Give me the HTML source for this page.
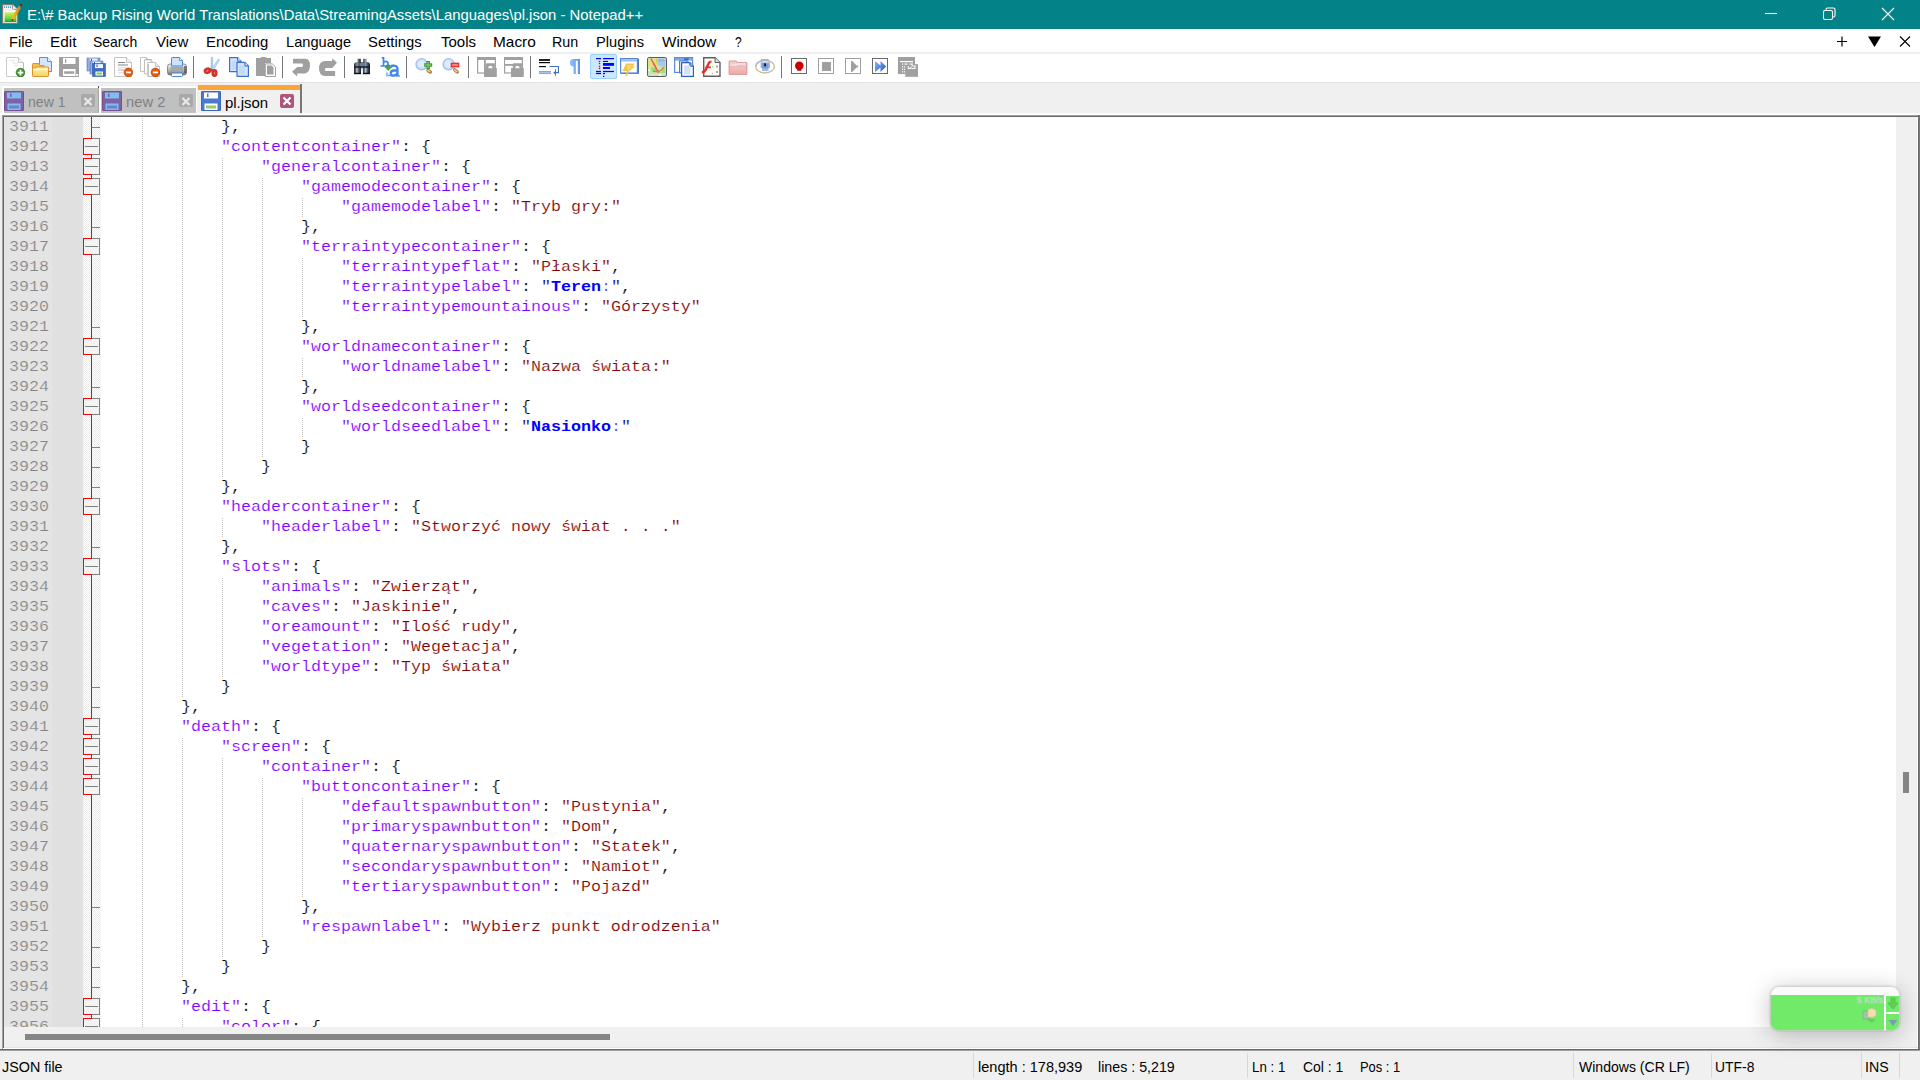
<!DOCTYPE html><html><head><meta charset="utf-8"><title>pl.json - Notepad++</title><style>

*{margin:0;padding:0;box-sizing:border-box}
html,body{width:1920px;height:1080px;overflow:hidden;background:#f0f0f0}
body{position:relative;font-family:"Liberation Sans", sans-serif;font-size:15px;color:#000}
.abs{position:absolute}
#title{left:0;top:0;width:1920px;height:29px;background:#038387}
#title .t{left:28px;top:0;height:29px;line-height:29px;color:#fff;font-size:15px;white-space:nowrap;transform-origin:0 50%}
#menu{left:0;top:29px;width:1920px;height:23px;background:#fff}
#menu span{position:absolute;top:0;height:23px;line-height:26px;font-size:15px;white-space:nowrap;transform-origin:0 50%}
#msep{left:0;top:52px;width:1920px;height:2px;background:#f0f0f0}
#tool{left:0;top:54px;width:1920px;height:28px;background:#fff}
#tsep{left:0;top:82px;width:1920px;height:1px;background:#e2e2e2}
.ic{position:absolute;top:3px;width:20px;height:20px}
.ic svg{display:block}
.sep{position:absolute;top:2px;width:1px;height:22px;background:#767676}
.hot{position:absolute;top:0;height:25px;width:27px;background:#cce8ff;border:1px solid #99d1ff;border-radius:2px}
#tabs{left:0;top:84px;width:1920px;height:30px;background:#f0f0f0}
.tab{position:absolute;top:4px;height:25px;background:#c0c0c0}
.tab .tx{position:absolute;top:0;line-height:28px;font-size:15px;color:#808080;white-space:nowrap;transform-origin:0 50%}
.tab.act{top:1px;height:29px;background:#f0f0f0}
.tab.act .tx{color:#000;line-height:35px}
.cls{position:absolute;width:14px;height:13px;border-radius:2px}
#edb{left:0;top:114px;width:1920px;height:937px}
#ed{left:4px;top:117px;width:1892px;height:910px;background:#fff;overflow:hidden}
#lnm{left:0;top:0;width:48px;height:910px;background:#e4e4e4}
#bkm{left:48px;top:0;width:31px;height:910px;background:#e0e0e0}
#fold{left:79px;top:0;width:18px;height:910px;background:#f2f2f2}
.ln{position:absolute;left:0;width:48px;height:20px;line-height:20px;font-family:"Liberation Mono", monospace;font-size:16.667px;color:#858585;padding-left:5px;white-space:pre;transform:scaleY(.88);transform-origin:0 14.5px;-webkit-text-stroke:.2px #e4e4e4}
.cl{position:absolute;height:20px;line-height:20px;font-family:"Liberation Mono", monospace;font-size:16.667px;white-space:pre;color:#000;transform:scaleY(.88);transform-origin:0 14.5px;-webkit-text-stroke:.18px #fff}
.b{-webkit-text-stroke:0}
.k{color:#8000ff}.s{color:#800000}.o{color:#000}.q{color:#000080}.b{color:#0000ff;font-weight:bold}.l{color:#4848ff}
.g{position:absolute;width:1px;background-image:linear-gradient(#c0c0c0 50%,transparent 50%);background-size:1px 2px}
#vs{left:1896px;top:117px;width:21px;height:910px;background:#f0f0f0}
#hs{left:4px;top:1027px;width:1913px;height:20px;background:#f0f0f0}
#status{left:0;top:1051px;width:1920px;height:29px;background:#f0f0f0}
#status span{position:absolute;top:0;height:29px;line-height:31px;font-size:15px;white-space:nowrap;transform-origin:0 50%}
#status i{position:absolute;top:2px;width:1px;height:25px;background:#d7d7d7}

</style></head><body>
<div id="title" class="abs">
<div class="abs" style="left:2px;top:4px;width:20px;height:20px"><svg width="21" height="20" viewBox="0 0 21 20" ><defs><linearGradient id="tg" x1="0" y1="0" x2="0" y2="1"><stop offset="0" stop-color="#e2ec60"/><stop offset=".55" stop-color="#6fe040"/><stop offset=".85" stop-color="#3fc42c"/><stop offset="1" stop-color="#1c6a12"/></linearGradient><linearGradient id="tp" x1="0" y1="0" x2="1" y2="0"><stop offset="0" stop-color="#f8c020"/><stop offset="1" stop-color="#d88a10"/></linearGradient></defs><path d="M0.6 0.6H10.5L15.7 5.5V19.4H0.6Z" fill="#f8f8fa" stroke="#8e7474" stroke-width="1.1"/><path d="M10.5 0.6V5.5H15.7" fill="#dfe4ea" stroke="#8a8a8a" stroke-width=".8"/><path d="M2.5 2.3v1.6M4.5 2.3v1.6M6.5 2.3v1.6M8.5 2.3v1.6" stroke="#4fb0b4" stroke-width="1.2"/><path d="M2 5.8H12" stroke="#e4e8ee" stroke-width="1"/><rect x="2.6" y="8.2" width="11.8" height="9.6" fill="url(#tg)"/><path d="M17.6 3.2L10.3 15.8" stroke="url(#tp)" stroke-width="3"/><path d="M18.6 1L17.3 3.3" stroke="#b0a0b0" stroke-width="1.2"/><rect x="17.8" y="0" width="2.2" height="2.2" fill="#b80010"/><path d="M9.8 14.7L11.9 15.8L9.6 17.2Z" fill="#5a3a10"/></svg></div>
<div class="abs t" id="ttext" style="left:27px;margin-left:0.00px;transform:scaleX(0.9910)">E:\# Backup Rising World Translations\Data\StreamingAssets\Languages\pl.json - Notepad++</div>
<svg class="abs" style="left:1740px;top:0" width="180" height="29" viewBox="0 0 180 29" fill="none" stroke="#fff" stroke-width="1.1"><path d="M25 13.5H37"/><rect x="83.5" y="10.5" width="9" height="9" rx="1.5"/><path d="M86 10.5V9.5a1.5 1.5 0 0 1 1.5-1.5H93.5a1.5 1.5 0 0 1 1.5 1.5V15.5a1.5 1.5 0 0 1-1.5 1.5H92.5"/><path d="M142 8L154 20M154 8L142 20"/></svg>
</div>
<div id="menu" class="abs">
<span id="m0" style="left:9px;margin-left:-0.25px;transform:scaleX(0.9735)">File</span>
<span id="m1" style="left:49px;margin-left:1.00px;transform:scaleX(1.0223)">Edit</span>
<span id="m2" style="left:93px;margin-left:0.37px;transform:scaleX(0.9311)">Search</span>
<span id="m3" style="left:155px;margin-left:1.00px;transform:scaleX(0.9995)">View</span>
<span id="m4" style="left:205px;margin-left:0.50px;transform:scaleX(0.9956)">Encoding</span>
<span id="m5" style="left:285px;margin-left:0.50px;transform:scaleX(0.9748)">Language</span>
<span id="m6" style="left:368px;margin-left:0.25px;transform:scaleX(0.9893)">Settings</span>
<span id="m7" style="left:439px;margin-left:1.50px;transform:scaleX(0.9990)">Tools</span>
<span id="m8" style="left:492px;margin-left:0.50px;transform:scaleX(1.0275)">Macro</span>
<span id="m9" style="left:552px;margin-left:0.10px;transform:scaleX(0.9526)">Run</span>
<span id="m10" style="left:595px;margin-left:0.50px;transform:scaleX(0.9762)">Plugins</span>
<span id="m11" style="left:660px;margin-left:1.50px;transform:scaleX(1.0167)">Window</span>
<span id="m12" style="left:734px;margin-left:1.00px;transform:scaleX(0.8000)">?</span>
<svg class="abs" style="left:1830px;top:4px" width="90" height="18" viewBox="0 0 90 18"><path d="M7 8.5H17M12 3.5V13.5" stroke="#000" stroke-width="1.2" fill="none"/><path d="M38 3.5H51L44.5 14Z" fill="#000"/><path d="M70 3.5L80 13.5M80 3.5L70 13.5" stroke="#000" stroke-width="1.1" fill="none"/></svg>
</div><div id="msep" class="abs"></div>
<div id="tool" class="abs">
<div class="ic" style="left:5px"><svg width="20" height="20" viewBox="0 0 20 20" ><path d="M1.5 0.5H13.5L18.5 5.5V19.5H1.5Z" fill="#fff" stroke="#cbcbcb" stroke-width="1" stroke-linejoin="round"/><path d="M13.5 0.5V5.5H18.5" fill="#f4f4f4" stroke="#cbcbcb" stroke-width="1" stroke-linejoin="round"/><path d="M18.5 6V15" stroke="#b8b8b8" stroke-width="1"/><path d="M4 3.5h6M7 6h6M9 8.5h4" stroke="#ececec" stroke-width="1.5"/><circle cx="15.5" cy="15.6" r="4.3" fill="#3f9a2c" stroke="#2c7a1e" stroke-width="0.8"/><path d="M15.5 12.8v5.6M12.7 15.6h5.6" stroke="#fff" stroke-width="1.8"/></svg></div>
<div class="ic" style="left:32px"><svg width="20" height="20" viewBox="0 0 20 20" ><defs><linearGradient id="og" x1="0" y1="0" x2="0" y2="1"><stop offset="0" stop-color="#fdf3c0"/><stop offset="1" stop-color="#f3d354"/></linearGradient></defs><path d="M7.5 0.5H15.5L19.5 4.5V14.5H7.5Z" fill="#d4e5fc" stroke="#5d8fe0" stroke-width="1" stroke-linejoin="round"/><path d="M15.5 0.5V4.5H19.5" fill="#eef5ff" stroke="#5d8fe0" stroke-width="1" stroke-linejoin="round"/><path d="M0.5 7.2Q0.5 6.5 1.2 6.5H6.5L8 8.5H12V12H0.5Z" fill="#f0c050" stroke="#e0902c" stroke-width="1"/><path d="M0.5 10.8Q3 11.5 5 10Q6 9.8 7 10H16.5V18.8Q16.5 19.5 15.8 19.5H1.2Q0.5 19.5 0.5 18.8Z" fill="url(#og)" stroke="#e0902c" stroke-width="1"/><path d="M1.5 12.5H15.5" stroke="#fff8dc" stroke-width="1.2"/></svg></div>
<div class="ic" style="left:59px"><svg width="20" height="20" viewBox="0 0 20 20" ><path d="M0 0H20V20H1L0 19Z" fill="#a0a0a0"/><rect x="4" y="1" width="12.5" height="6" fill="#fff"/><rect x="6.2" y="2" width="1" height="3.8" fill="#888"/><rect x="4" y="12" width="12.5" height="7" fill="#fff"/><rect x="5.2" y="14.3" width="10" height="2.5" fill="#a0a0a0"/><rect x="17.2" y="17" width="2" height="2" fill="#fff"/></svg></div>
<div class="ic" style="left:86px"><svg width="20" height="20" viewBox="0 0 20 20" ><rect x="1" y="1" width="13" height="13" fill="#7c9cdc" stroke="#5e82cc" stroke-width="0.6"/><rect x="3.5" y="1.6" width="8" height="4" fill="#eef4ff"/><rect x="5" y="2" width="1" height="2.5" fill="#2f55a0"/><rect x="2" y="1.5" width="2" height="12" fill="#9db8e8" opacity=".7"/><rect x="4" y="4" width="13" height="13" fill="#7c9cdc" stroke="#5e82cc" stroke-width="0.6"/><rect x="6.5" y="4.6" width="8" height="4" fill="#eef4ff"/><rect x="8" y="5" width="1" height="2.5" fill="#2f55a0"/><rect x="5" y="4.5" width="2" height="12" fill="#9db8e8" opacity=".7"/><rect x="6.5" y="6.5" width="13" height="13" fill="#3f6cc0" stroke="#2f58a8" stroke-width="0.6"/><rect x="9" y="7.1" width="8" height="4" fill="#eef4ff"/><rect x="10.5" y="7.5" width="1" height="2.5" fill="#2f55a0"/><rect x="9.5" y="14.5" width="7.5" height="4" fill="#fff"/><rect x="10.5" y="15.5" width="5.5" height="2" fill="#7ed04a"/></svg></div>
<div class="ic" style="left:113px"><svg width="20" height="20" viewBox="0 0 20 20" ><path d="M1.5 0.5H13.5L18.5 5.5V19.5H1.5Z" fill="#fff" stroke="#c4c4c4" stroke-width="1" stroke-linejoin="round"/><path d="M13.5 0.5V5.5H18.5" fill="#f2f2f2" stroke="#c4c4c4" stroke-width="1" stroke-linejoin="round"/><path d="M5 5.5h7" stroke="#888" stroke-width="1"/><path d="M5 8h10" stroke="#bcbcbc" stroke-width="1.8"/><path d="M5 10.8h9" stroke="#d8d8d8" stroke-width="1"/><path d="M5 13h6" stroke="#d0d0d0" stroke-width="1.6"/><path d="M5 15.8h5" stroke="#d8d8d8" stroke-width="1"/><circle cx="15.4" cy="15.4" r="4.3" fill="#e85a10" stroke="#c84400" stroke-width="0.8"/><rect x="12.9" y="14.5" width="5" height="1.8" fill="#fff"/></svg></div>
<div class="ic" style="left:140px"><svg width="20" height="20" viewBox="0 0 20 20" ><path d="M0.5 0.5H6.5L9.5 3.5V14.5H0.5Z" fill="#fff" stroke="#c4c4c4" stroke-width="1" stroke-linejoin="round"/><path d="M6.5 0.5V3.5H9.5" fill="#f2f2f2" stroke="#c4c4c4" stroke-width="1" stroke-linejoin="round"/><path d="M4.5 2.8H11L14 5.8V16.8H4.5Z" fill="#fff" stroke="#c0c0c0" stroke-width="1" stroke-linejoin="round"/><path d="M11 2.8V5.8H14" fill="#e8e8e8" stroke="#c0c0c0" stroke-width="1" stroke-linejoin="round"/><path d="M5.5 2.5h6" stroke="#b0b0b0" stroke-width="1"/><path d="M7.8 5.5H15.5L19.5 9.5V19.5H7.8Z" fill="#fff" stroke="#c0c0c0" stroke-width="1" stroke-linejoin="round"/><path d="M15.5 5.5V9.5H19.5" fill="#ececec" stroke="#c0c0c0" stroke-width="1" stroke-linejoin="round"/><path d="M8.3 7V19" stroke="#b8b8b8" stroke-width="1"/><circle cx="15.4" cy="15.4" r="4.3" fill="#e85a10" stroke="#c84400" stroke-width="0.8"/><rect x="12.9" y="14.5" width="5" height="1.8" fill="#fff"/></svg></div>
<div class="ic" style="left:167px"><svg width="20" height="20" viewBox="0 0 20 20" ><defs><linearGradient id="pg" x1="0" y1="0" x2="0" y2="1"><stop offset="0" stop-color="#f4f4f4"/><stop offset=".55" stop-color="#b8b8b8"/><stop offset="1" stop-color="#6a6a6a"/></linearGradient></defs><rect x="0.5" y="7" width="19" height="11" rx="2.5" fill="url(#pg)" stroke="#777" stroke-width="0.8"/><rect x="3.5" y="10" width="13" height="4" fill="#a8a8a8"/><path d="M4.5 9V1.2Q4.5 0.5 5.2 0.5H12.5L15.5 3.5V9Z" fill="#cde2fb" stroke="#4a86d8" stroke-width="1"/><path d="M12.5 0.5V3.5H15.5" fill="#eef6ff" stroke="#4a86d8" stroke-width=".8"/><rect x="4.5" y="16" width="11" height="3.5" rx="1" fill="#f4faff" stroke="#4a86d8" stroke-width="1"/><rect x="17" y="9" width="2.5" height="7" fill="#333" opacity=".55"/></svg></div>
<div class="sep" style="left:193px"></div>
<div class="ic" style="left:202px"><svg width="20" height="20" viewBox="0 0 20 20" ><path d="M9.4 0L10.8 0.3L10.6 14.5L8.8 14Z" fill="#a9d0ee" stroke="#7fb4dc" stroke-width=".5"/><path d="M16.6 1.8L17.6 3L11 14L9.8 11.5Z" fill="#bcdcf4" stroke="#7fb4dc" stroke-width=".5"/><ellipse cx="5.4" cy="13.8" rx="2.4" ry="1.9" fill="#f0b8b0" stroke="#d0342c" stroke-width="2.8" transform="rotate(-25 5.4 13.8)"/><ellipse cx="12.5" cy="16" rx="1.7" ry="2.6" fill="#f0b8b0" stroke="#d0342c" stroke-width="2.8"/><path d="M7.5 12L10.8 13.6" stroke="#d0342c" stroke-width="2.4"/></svg></div>
<div class="ic" style="left:229px"><svg width="20" height="20" viewBox="0 0 20 20" ><path d="M0.6 0.6H8.6L12.1 4.1V14.6H0.6Z" fill="#d6e5fb" stroke="#3b6fd4" stroke-width="1.2" stroke-linejoin="round"/><path d="M8.6 0.6V4.1H12.1" fill="#f4f8ff" stroke="#3b6fd4" stroke-width="1.2" stroke-linejoin="round"/><rect x="2.6" y="3.6" width="6" height="9" fill="#bcd3f6" opacity=".7"/><path d="M8 5.4H15.9L19.4 8.9V19.4H8Z" fill="#d6e5fb" stroke="#3b6fd4" stroke-width="1.2" stroke-linejoin="round"/><path d="M15.9 5.4V8.9H19.4" fill="#f4f8ff" stroke="#3b6fd4" stroke-width="1.2" stroke-linejoin="round"/><rect x="10" y="8.4" width="5.9" height="9" fill="#bcd3f6" opacity=".7"/></svg></div>
<div class="ic" style="left:256px"><svg width="20" height="20" viewBox="0 0 20 20" ><path d="M0 1H4.5Q5 0 6 0H9Q10 0 10.5 1H15V6H9V19H0Z" fill="#a0a0a0"/><path d="M9.3 6.9H16.3L19.5 10V19.5H9.3Z" fill="#fff" stroke="#a0a0a0" stroke-width="1"/><path d="M11 8.5H15.5L17.5 10.5V17.5H11Z" fill="#a0a0a0"/></svg></div>
<div class="sep" style="left:282px"></div>
<div class="ic" style="left:291px"><svg width="20" height="20" viewBox="0 0 20 20" ><path d="M2 1.8H14.5Q19 2.3 19 8.5Q19 15 14 16.4H6.2V19.6L1 14.8L6.2 10H11.5Q12.3 8.2 11.5 6.4H2Z" fill="#a0a0a0"/></svg></div>
<div class="ic" style="left:318px"><svg width="20" height="20" viewBox="0 0 20 20" ><path d="M19 5.7L14.2 1.2V4.1H6.5Q1 5 1 11.5Q1 18 6.5 19H17.1V14.1H7.5Q6 12.5 7.5 10.9H14.2Z" fill="#a0a0a0"/></svg></div>
<div class="sep" style="left:344px"></div>
<div class="ic" style="left:353px"><svg width="20" height="20" viewBox="0 0 20 20" ><defs><linearGradient id="bg1" x1="0" y1="0" x2="1" y2="0"><stop offset="0" stop-color="#1c2028"/><stop offset=".4" stop-color="#8a9aac"/><stop offset=".75" stop-color="#3a424e"/><stop offset="1" stop-color="#14171c"/></linearGradient></defs><path d="M4.5 1.8H7.8V5H8.6V17H1V8Q1 5.2 4.5 5Z" fill="url(#bg1)"/><path d="M10.2 1.8H13.5V5Q17 5.2 17 8V17H9.4V5H10.2Z" fill="url(#bg1)"/><rect x="6.5" y="6" width="5" height="3.2" fill="#6c7e94"/><rect x="1" y="9.3" width="16" height="1.4" fill="#14171c"/><rect x="1" y="15.8" width="7.6" height="1.4" fill="#0c0e12"/><rect x="9.4" y="15.8" width="7.6" height="1.4" fill="#0c0e12"/><path d="M8.6 10.7H9.4V17.2H8.6Z" fill="#fff"/><path d="M8 12.5L9 10.7L10 12.5V17.2H8Z" fill="#fff" opacity=".85"/><rect x="3.2" y="11.3" width="1.3" height="4.2" fill="#c6d0dc" opacity=".75"/><rect x="12.2" y="11.3" width="1.3" height="4.2" fill="#c6d0dc" opacity=".75"/></svg></div>
<div class="ic" style="left:380px"><svg width="20" height="20" viewBox="0 0 20 20" ><path d="M1.8 0.8H3.5V9M0.5 9H5" fill="none" stroke="#3e86ea" stroke-width="1.7"/><path d="M3.5 5.5Q5 3.8 6.8 4.6Q8.5 5.6 8 7.5Q7.3 9.3 5 9" fill="none" stroke="#3e86ea" stroke-width="1.7"/><path d="M6.5 8H10V10.3H11.5L8.2 13.6L5 10.3H6.5Z" fill="#3fae3c" stroke="#2f8f2e" stroke-width=".5"/><path d="M10.5 9.8Q13 8 15.8 9Q17.5 9.8 17.5 12V19M17.5 13.5H13.5Q10.5 14 10.8 16.5Q11.3 19 14 18.6Q16.5 18 17.5 16" fill="none" stroke="#3e86ea" stroke-width="2.3"/><path d="M16 19H20M8 18.5H12M11 8.5H14" stroke="#3e86ea" stroke-width="1.6" opacity=".8"/><path d="M7 15.5V19.5" stroke="#3e86ea" stroke-width="1.6" opacity=".7"/></svg></div>
<div class="sep" style="left:406px"></div>
<div class="ic" style="left:415px"><svg width="20" height="20" viewBox="0 0 20 20" ><circle cx="6.6" cy="7.3" r="5.6" fill="#d0e2fa" stroke="#9fbfee" stroke-width="1.3"/><circle cx="6.3" cy="7" r="3.3" fill="#e4eefc" opacity=".8"/><path d="M13 13.5L15.3 15" stroke="#b07a32" stroke-width="3.4" stroke-linecap="round"/><path d="M13 13.5L14.9 14.6" stroke="#eccb96" stroke-width="1.6" stroke-linecap="round"/><path d="M13.2 4V12M9.2 8H17.2" stroke="#3f9a34" stroke-width="3.4"/><path d="M13.2 5V11M10.2 8H16.2" stroke="#7cc468" stroke-width="1.4"/></svg></div>
<div class="ic" style="left:442px"><svg width="20" height="20" viewBox="0 0 20 20" ><circle cx="6.7" cy="7.3" r="5.6" fill="#d0e2fa" stroke="#9fbfee" stroke-width="1.3"/><circle cx="6.4" cy="7" r="3.3" fill="#e4eefc" opacity=".8"/><path d="M12.6 12.8L15.3 15" stroke="#b07a32" stroke-width="3.4" stroke-linecap="round"/><path d="M12.6 12.8L14.9 14.6" stroke="#eccb96" stroke-width="1.6" stroke-linecap="round"/><rect x="9" y="6" width="8" height="4" fill="#f03a3a" stroke="#e01818" stroke-width=".6"/><rect x="10.2" y="7.3" width="5.6" height="1.4" fill="#f8a0a0"/></svg></div>
<div class="sep" style="left:468px"></div>
<div class="ic" style="left:477px"><svg width="20" height="20" viewBox="0 0 20 20" ><rect x="0.6" y="0.6" width="17.8" height="15.4" fill="#fff" stroke="#a0a0a0" stroke-width="1.2"/><rect x="0" y="0" width="19" height="3" fill="#a0a0a0"/><rect x="7" y="3" width="1.8" height="13" fill="#a0a0a0"/><rect x="9" y="4" width="8" height="2" fill="#fff"/><path d="M8.8 11V7.5Q8.8 6.3 10 6.3H17.8V11H19.8V20H7V11Z" fill="#a0a0a0"/><path d="M11.2 11.2Q11.2 8.8 13.4 8.8Q15.6 8.8 15.6 11.2Z" fill="#fff"/></svg></div>
<div class="ic" style="left:504px"><svg width="20" height="20" viewBox="0 0 20 20" ><rect x="0.6" y="0.6" width="17.8" height="15.4" fill="#fff" stroke="#a0a0a0" stroke-width="1.2"/><rect x="0" y="0" width="19" height="3" fill="#a0a0a0"/><rect x="1" y="7" width="17" height="1.8" fill="#a0a0a0"/><rect x="1.2" y="3.5" width="16" height="2.2" fill="#fff"/><path d="M8.8 11V7.5Q8.8 6.3 10 6.3H17.8V11H19.8V20H7V11Z" fill="#a0a0a0"/><path d="M11.2 11.2Q11.2 8.8 13.4 8.8Q15.6 8.8 15.6 11.2Z" fill="#fff"/></svg></div>
<div class="sep" style="left:530px"></div>
<div class="ic" style="left:539px"><svg width="20" height="20" viewBox="0 0 20 20" ><rect x="0" y="2" width="11" height="2" fill="#222"/><rect x="0" y="5" width="11" height="1.2" fill="#000"/><rect x="0" y="9" width="7" height="1.2" fill="#111"/><rect x="0" y="14" width="12" height="3" fill="#7eaaec"/><rect x="0" y="15" width="12" height="1" fill="#a4c4f4"/><path d="M10.5 9.5H19.5V15.7H15" fill="none" stroke="#3e72c8" stroke-width="1.2"/><path d="M14.2 15.7L17 13.5V18Z" fill="#3e72c8"/><path d="M16.5 12V19" stroke="#3e72c8" stroke-width="0.8"/></svg></div>
<div class="ic" style="left:566px"><svg width="20" height="20" viewBox="0 0 20 20" ><defs><linearGradient id="pc" x1="0" y1="0" x2="1" y2="0"><stop offset="0" stop-color="#8ec4ff"/><stop offset="1" stop-color="#5a92ec"/></linearGradient></defs><path d="M14 2V17H11.8V3.8H9.8V17H7.6V9.5Q3.8 9.5 3.8 5.7Q3.8 2 7.8 2Z" fill="url(#pc)"/></svg></div>
<div class="hot" style="left:590px"></div>
<div class="ic" style="left:594px;top:4px"><svg width="20" height="20" viewBox="0 0 20 20" ><rect x="2" y="0" width="5" height="1.2" fill="#0000ff"/><rect x="9" y="0" width="11" height="1.2" fill="#0000ff"/><rect x="4.8" y="2.8" width="1.4" height="1.4" fill="#ff0000"/><rect x="4.8" y="4.8" width="1.4" height="1.4" fill="#ff0000"/><rect x="4.8" y="7.8" width="1.4" height="1.4" fill="#ff0000"/><rect x="4.8" y="9.8" width="1.4" height="1.4" fill="#ff0000"/><rect x="9" y="2.9" width="5" height="1.1" fill="#0000ff"/><rect x="9" y="5" width="11" height="2.8" fill="#0000ff"/><rect x="9" y="9" width="7" height="2" fill="#0000ff"/><rect x="2" y="12.9" width="5" height="1.2" fill="#0000ff"/><rect x="9" y="12.9" width="11" height="1.2" fill="#0000ff"/><rect x="2" y="14.9" width="5" height="1.2" fill="#0000ff"/><rect x="9" y="14.9" width="2" height="1.2" fill="#0000ff"/><rect x="9" y="17.8" width="1.3" height="1.2" fill="#0000ff"/></svg></div>
<div class="ic" style="left:620px"><svg width="20" height="20" viewBox="0 0 20 20" ><rect x="1" y="1.8" width="18" height="15" fill="#4a70bc"/><rect x="0.6" y="1.6" width="16.8" height="14.4" fill="#fff" stroke="#5a86d4" stroke-width="1.2"/><rect x="1" y="2" width="16" height="2.6" fill="#9ec2f2"/><path d="M6 6.5H15L12.5 9.5H15.5L8.5 14.5L7 19H5.5L7 14H2.5Z" fill="#f2c648"/><path d="M7 8H12L10 10.5H12.5L7.5 13.5Z" fill="#f8dc80" opacity=".8"/></svg></div>
<div class="ic" style="left:647px"><svg width="20" height="20" viewBox="0 0 20 20" ><rect x="0.5" y="0.5" width="19" height="19" rx="1.6" fill="#c4e8b4" stroke="#5c5c68" stroke-width="1"/><path d="M1.5 1.5H10.5V12H4.5L1.5 13Z" fill="#e2e27c"/><path d="M10.5 1.5H18.5V9.5H13.5L10.5 7Z" fill="#a8c8f2"/><rect x="4.5" y="10.5" width="4.5" height="4" fill="#8cdc70"/><rect x="10.5" y="13.5" width="3" height="3" fill="#98e07c"/><rect x="15" y="12" width="3" height="4" fill="#98e07c"/><path d="M1.5 16.5H18.5V18.5H1.5Z" fill="#cfe6c4"/><path d="M4 1.5L5.5 4.5L7.5 8L9 11L10.5 14L11.5 15.5" fill="none" stroke="#f05050" stroke-width="1.4"/><path d="M6 14.5L11 14.5L14.5 13L16 11L17.5 10" fill="none" stroke="#f07838" stroke-width="1.3"/><path d="M6.7 6.5L7.7 9" stroke="#f05890" stroke-width="1.6"/><rect x="12" y="17" width="2" height="1.5" fill="#fff"/><rect x="1.5" y="12.5" width="1.5" height="1.5" fill="#fff"/><path d="M10.5 3.5H18M13 1.5V5M16 1.5V5" stroke="#88acdf" stroke-width=".8"/><path d="M9.5 1.5V6" stroke="#d8d040" stroke-width="1"/></svg></div>
<div class="ic" style="left:674px"><svg width="20" height="20" viewBox="0 0 20 20" ><rect x="0.6" y="0.6" width="18" height="14.8" fill="#fff" stroke="#5e8ad8" stroke-width="1.2"/><rect x="1" y="1" width="17.5" height="2.6" fill="#7ea6e6"/><rect x="10" y="1.2" width="4.5" height="2" fill="#3a6cc8"/><path d="M5.6 3.8H13.1L16.1 6.8V15.8H5.6Z" fill="#fff" stroke="#4b7ad2" stroke-width="1.2" stroke-linejoin="round"/><path d="M13.1 3.8V6.8H16.1" fill="#eef4ff" stroke="#4b7ad2" stroke-width="1.2" stroke-linejoin="round"/><path d="M7.6 5.6H15.9L19.4 9.1V19.4H7.6Z" fill="#fff" stroke="#2f62c8" stroke-width="1.3" stroke-linejoin="round"/><path d="M15.9 5.6V9.1H19.4" fill="#9ccaf8" stroke="#2f62c8" stroke-width="1.3" stroke-linejoin="round"/><rect x="10" y="8.5" width="6.5" height="9" fill="#d2e0f8"/></svg></div>
<div class="ic" style="left:701px"><svg width="20" height="20" viewBox="0 0 20 20" ><path d="M2.7 0.7H14L19 5.5V19.3H2.7Z" fill="#fffdf6" stroke="#606060" stroke-width="1.4"/><path d="M14 0.7V5.5H19" fill="#ddd" stroke="#606060" stroke-width="1"/><path d="M10.5 4.6Q8.2 4.6 7.2 7.2L4.8 12.5Q3.8 15 0.8 15.2" fill="none" stroke="#e83030" stroke-width="2.4"/><path d="M4.5 10.3H9.8" stroke="#e83030" stroke-width="1.8"/><path d="M9 4.5L9.8 5.2" stroke="#e060b0" stroke-width="1.2"/><path d="M16 8.5V10.5M16 14V16" stroke="#555" stroke-width="1"/><rect x="11" y="9" width="1" height="1" fill="#7c7"/><rect x="11" y="16" width="1" height="1" fill="#7c7"/></svg></div>
<div class="ic" style="left:728px"><svg width="20" height="20" viewBox="0 0 20 20" ><defs><linearGradient id="fg" x1="0" y1="0" x2="0" y2="1"><stop offset="0" stop-color="#f6d4d4"/><stop offset="1" stop-color="#eaa8a8"/></linearGradient></defs><path d="M1.2 5Q1.2 4.2 2 4.2H8L9.5 5.7H18Q18.8 5.7 18.8 6.5V16.7Q18.8 17.5 18 17.5H2Q1.2 17.5 1.2 16.7Z" fill="url(#fg)" stroke="#e29c9c" stroke-width="1.2"/><path d="M2.5 8.2H8L9.5 6.9H17.5" fill="none" stroke="#fbe8e8" stroke-width="1.2"/><path d="M2.5 9.5H17.5" stroke="#eab4b4" stroke-width=".8"/></svg></div>
<div class="ic" style="left:755px"><svg width="20" height="20" viewBox="0 0 20 20" ><ellipse cx="10" cy="9.6" rx="9.4" ry="6.3" fill="#fff" stroke="#e6b07c" stroke-width="1.2"/><ellipse cx="10" cy="9.6" rx="9.4" ry="6.3" fill="none" stroke="#b4c8b4" stroke-width="1.3" stroke-dasharray="1.4 2.6"/><path d="M1 9.6A9.4 6.3 0 0 1 8 3.5" fill="none" stroke="#b8bcc0" stroke-width="1.3"/><rect x="6" y="2" width="7.7" height="2.3" fill="#b4b4b4"/><path d="M5.5 5.3H15V11H13.5V14H7V11H5.5Z" fill="#98bcf0"/><rect x="7" y="6.5" width="6.5" height="5" fill="#7a9cd4"/><rect x="9.3" y="6.3" width="1.6" height="3" fill="#000"/><rect x="8" y="6.5" width="1" height="2" fill="#9a78d8"/></svg></div>
<div class="sep" style="left:781px"></div>
<div class="ic" style="left:790px"><svg width="20" height="20" viewBox="0 0 20 20" ><rect x="1.5" y="1.5" width="15" height="15" fill="#fff" stroke="#6a6a6a" stroke-width="1"/><circle cx="9.3" cy="8.8" r="4.3" fill="#cc0000"/><rect x="7.3" y="11.5" width="4" height="2.3" fill="#cc0000"/></svg></div>
<div class="ic" style="left:817px"><svg width="20" height="20" viewBox="0 0 20 20" ><rect x="1.5" y="1.5" width="15" height="15" fill="#fff" stroke="#a0a0a0" stroke-width="1"/><rect x="5" y="5" width="9" height="9" fill="#a0a0a0"/></svg></div>
<div class="ic" style="left:844px"><svg width="20" height="20" viewBox="0 0 20 20" ><rect x="1.5" y="1.5" width="15" height="15" fill="#fff" stroke="#a0a0a0" stroke-width="1"/><path d="M7 4H8.2L12.5 8.5H14V10.5H12.5L8.2 15H7Z" fill="#a0a0a0"/></svg></div>
<div class="ic" style="left:871px"><svg width="20" height="20" viewBox="0 0 20 20" ><rect x="1.5" y="1.5" width="15" height="15" fill="#fff" stroke="#6a6a6a" stroke-width="1"/><defs><linearGradient id="pm" x1="0" y1="0" x2="1" y2="1"><stop offset="0" stop-color="#8db8f4"/><stop offset="1" stop-color="#1e58d0"/></linearGradient></defs><path d="M4 4L9.5 8.5V4L15.2 9.5L9.5 15V10.5L4 15Z" fill="url(#pm)"/></svg></div>
<div class="ic" style="left:898px"><svg width="20" height="20" viewBox="0 0 20 20" ><rect x="0" y="0" width="17" height="17" fill="#a0a0a0"/><rect x="7.3" y="7.2" width="12.7" height="12.6" fill="#a0a0a0"/><rect x="2" y="4" width="13" height="1.2" fill="#fff"/><rect x="4" y="6.5" width="1.2" height="1.2" fill="#fff"/><rect x="6.5" y="6.5" width="3" height="1.2" fill="#fff"/><rect x="11.5" y="6.5" width="3.5" height="1.2" fill="#fff"/><rect x="4" y="9.2" width="1.2" height="1.2" fill="#fff"/><rect x="6" y="9.2" width="1.2" height="1.2" fill="#fff"/><rect x="4" y="11.7" width="1.2" height="1.2" fill="#fff"/><rect x="6" y="11.7" width="1.2" height="1.2" fill="#fff"/><rect x="4" y="14.2" width="1.2" height="1.2" fill="#fff"/><rect x="6" y="14.2" width="1.2" height="1.2" fill="#fff"/><path d="M10.3 9V11.5H13V9.8M13.5 9H17V11.5H14" fill="none" stroke="#fff" stroke-width="1.1"/></svg></div>
</div><div id="tsep" class="abs"></div>
<div id="tabs" class="abs">
<div class="abs" style="left:2px;top:2px;width:96px;height:27px;background:#fff"></div>
<div class="abs" style="left:99px;top:2px;width:98px;height:27px;background:#fff"></div>
<div class="tab" style="left:4px;width:94px"><div class="abs" style="left:0px;top:3px"><svg width="20" height="20" viewBox="0 0 20 20" ><rect x="0.5" y="0.5" width="19" height="19" rx="0.4" fill="#7d62a6" stroke="#74508f"/><rect x="3" y="1.5" width="14" height="6" fill="#7fbdf0"/><rect x="6" y="2.5" width="1.5" height="3.5" fill="#7d62a6"/><rect x="3.5" y="12.5" width="13" height="6.5" fill="#7fbdf0"/><rect x="5" y="14.5" width="10" height="3" fill="#6b84c4"/></svg></div><span class="tx" id="t0" style="left:23px;margin-left:0.53px;transform:scaleX(0.9405)">new 1</span><div class="cls" style="left:77px;top:6px;height:13px;background:#a9a9a9"><svg width="14" height="13" viewBox="0 0 14 13"><path d="M3.5 3L10.5 10M10.5 3L3.5 10" stroke="#e8e8e8" stroke-width="2.2" fill="none"/></svg></div></div>
<div class="tab" style="left:101px;width:95px"><div class="abs" style="left:1px;top:3px"><svg width="20" height="20" viewBox="0 0 20 20" ><rect x="0.5" y="0.5" width="19" height="19" rx="0.4" fill="#7d62a6" stroke="#74508f"/><rect x="3" y="1.5" width="14" height="6" fill="#7fbdf0"/><rect x="6" y="2.5" width="1.5" height="3.5" fill="#7d62a6"/><rect x="3.5" y="12.5" width="13" height="6.5" fill="#7fbdf0"/><rect x="5" y="14.5" width="10" height="3" fill="#6b84c4"/></svg></div><span class="tx" id="t1" style="left:25px;margin-left:0.33px;transform:scaleX(0.9837)">new 2</span><div class="cls" style="left:78px;top:6px;height:13px;background:#a9a9a9"><svg width="14" height="13" viewBox="0 0 14 13"><path d="M3.5 3L10.5 10M10.5 3L3.5 10" stroke="#e8e8e8" stroke-width="2.2" fill="none"/></svg></div></div>
<div class="tab act" style="left:198px;width:103px"><div class="abs" style="left:0;top:0;width:102px;height:5px;background:#faa43a"></div><div class="abs" style="left:3px;top:6px"><svg width="20" height="20" viewBox="0 0 20 20" ><rect x="0.5" y="0.5" width="19" height="19" rx="0.4" fill="#4a78cc" stroke="#3f66b8"/><rect x="3" y="1.5" width="14" height="6" fill="#ffffff"/><rect x="6" y="2.5" width="1.5" height="3.5" fill="#4a78cc"/><rect x="3.5" y="12.5" width="13" height="6.5" fill="#ffffff"/><rect x="5" y="14.5" width="10" height="3" fill="#8fce6e"/></svg></div><span class="tx" id="t2" style="left:27px;margin-left:-0.25px;transform:scaleX(0.9952)">pl.json</span><div class="cls" style="left:82px;top:9px;height:14px;background:#b0557a"><svg width="14" height="14" viewBox="0 0 14 14"><path d="M3.5 3.5L10.5 10.5M10.5 3.5L3.5 10.5" stroke="#ffffff" stroke-width="2.2" fill="none"/></svg></div></div>
<div class="abs" style="left:98px;top:4px;width:1px;height:25px;background:#a6a6a6"></div>
<div class="abs" style="left:98px;top:2px;width:1px;height:2px;background:#555"></div>
<div class="abs" style="left:300px;top:0;width:2px;height:30px;background:#777"></div>
</div>
<div id="edb" class="abs">
<div class="abs" style="left:0;top:-1px;width:1920px;height:2px;background:#fbfbfb"></div>
<div class="abs" style="left:2px;top:1px;width:1918px;height:1px;background:#a0a0a0"></div>
<div class="abs" style="left:3px;top:2px;width:1916px;height:1px;background:#696969"></div>
<div class="abs" style="left:2px;top:1px;width:1px;height:934px;background:#a0a0a0"></div>
<div class="abs" style="left:3px;top:2px;width:1px;height:932px;background:#696969"></div>
<div class="abs" style="left:1917px;top:3px;width:1px;height:931px;background:#fff"></div>
<div class="abs" style="left:1918px;top:1px;width:1px;height:935px;background:#696969"></div>
<div class="abs" style="left:1919px;top:1px;width:1px;height:935px;background:#7a7a7a"></div>
<div class="abs" style="left:4px;top:933px;width:1914px;height:1px;background:#e3e3e3"></div>
<div class="abs" style="left:3px;top:934px;width:1915px;height:1px;background:#fff"></div>
<div class="abs" style="left:0;top:935px;width:1920px;height:1px;background:#696969"></div>
<div class="abs" style="left:0;top:936px;width:1920px;height:1px;background:#a0a0a0"></div>
</div>
<div id="ed" class="abs">
<div id="lnm" class="abs"></div><div id="bkm" class="abs"></div>
<svg id="fold" class="abs" width="18" height="910" viewBox="0 0 18 910" shape-rendering="crispEdges">
<defs><pattern id="dp" width="2" height="2" patternUnits="userSpaceOnUse"><rect width="2" height="2" fill="#fff"/><rect width="1" height="1" fill="#e9e9e9"/><rect x="1" y="1" width="1" height="1" fill="#e9e9e9"/></pattern></defs>
<rect width="18" height="910" fill="url(#dp)"/>
<rect x="8" y="0" width="1" height="910" fill="#ff0000"/>
<rect x="9" y="10" width="8" height="1" fill="#808080"/>
<rect x="0" y="21" width="17" height="17" fill="#f3f3f3"/>
<path d="M8.5 21.5H16.5V37.5H8.5" fill="none" stroke="#808080" stroke-width="1"/>
<path d="M8.5 21.5H0.5V37.5H8.5" fill="none" stroke="#ff0000" stroke-width="1"/>
<rect x="2" y="29" width="13" height="1" fill="#808080"/>
<rect x="0" y="41" width="17" height="17" fill="#f3f3f3"/>
<path d="M8.5 41.5H16.5V57.5H8.5" fill="none" stroke="#808080" stroke-width="1"/>
<path d="M8.5 41.5H0.5V57.5H8.5" fill="none" stroke="#ff0000" stroke-width="1"/>
<rect x="2" y="49" width="13" height="1" fill="#808080"/>
<rect x="0" y="61" width="17" height="17" fill="#f3f3f3"/>
<path d="M8.5 61.5H16.5V77.5H8.5" fill="none" stroke="#808080" stroke-width="1"/>
<path d="M8.5 61.5H0.5V77.5H8.5" fill="none" stroke="#ff0000" stroke-width="1"/>
<rect x="2" y="69" width="13" height="1" fill="#808080"/>
<rect x="9" y="110" width="8" height="1" fill="#808080"/>
<rect x="0" y="121" width="17" height="17" fill="#f3f3f3"/>
<path d="M8.5 121.5H16.5V137.5H8.5" fill="none" stroke="#808080" stroke-width="1"/>
<path d="M8.5 121.5H0.5V137.5H8.5" fill="none" stroke="#ff0000" stroke-width="1"/>
<rect x="2" y="129" width="13" height="1" fill="#808080"/>
<rect x="9" y="210" width="8" height="1" fill="#808080"/>
<rect x="0" y="221" width="17" height="17" fill="#f3f3f3"/>
<path d="M8.5 221.5H16.5V237.5H8.5" fill="none" stroke="#808080" stroke-width="1"/>
<path d="M8.5 221.5H0.5V237.5H8.5" fill="none" stroke="#ff0000" stroke-width="1"/>
<rect x="2" y="229" width="13" height="1" fill="#808080"/>
<rect x="9" y="270" width="8" height="1" fill="#808080"/>
<rect x="0" y="281" width="17" height="17" fill="#f3f3f3"/>
<path d="M8.5 281.5H16.5V297.5H8.5" fill="none" stroke="#808080" stroke-width="1"/>
<path d="M8.5 281.5H0.5V297.5H8.5" fill="none" stroke="#ff0000" stroke-width="1"/>
<rect x="2" y="289" width="13" height="1" fill="#808080"/>
<rect x="9" y="330" width="8" height="1" fill="#808080"/>
<rect x="9" y="350" width="8" height="1" fill="#808080"/>
<rect x="9" y="370" width="8" height="1" fill="#808080"/>
<rect x="0" y="381" width="17" height="17" fill="#f3f3f3"/>
<path d="M8.5 381.5H16.5V397.5H8.5" fill="none" stroke="#808080" stroke-width="1"/>
<path d="M8.5 381.5H0.5V397.5H8.5" fill="none" stroke="#ff0000" stroke-width="1"/>
<rect x="2" y="389" width="13" height="1" fill="#808080"/>
<rect x="9" y="430" width="8" height="1" fill="#808080"/>
<rect x="0" y="441" width="17" height="17" fill="#f3f3f3"/>
<path d="M8.5 441.5H16.5V457.5H8.5" fill="none" stroke="#808080" stroke-width="1"/>
<path d="M8.5 441.5H0.5V457.5H8.5" fill="none" stroke="#ff0000" stroke-width="1"/>
<rect x="2" y="449" width="13" height="1" fill="#808080"/>
<rect x="9" y="570" width="8" height="1" fill="#808080"/>
<rect x="9" y="590" width="8" height="1" fill="#808080"/>
<rect x="0" y="601" width="17" height="17" fill="#f3f3f3"/>
<path d="M8.5 601.5H16.5V617.5H8.5" fill="none" stroke="#808080" stroke-width="1"/>
<path d="M8.5 601.5H0.5V617.5H8.5" fill="none" stroke="#ff0000" stroke-width="1"/>
<rect x="2" y="609" width="13" height="1" fill="#808080"/>
<rect x="0" y="621" width="17" height="17" fill="#f3f3f3"/>
<path d="M8.5 621.5H16.5V637.5H8.5" fill="none" stroke="#808080" stroke-width="1"/>
<path d="M8.5 621.5H0.5V637.5H8.5" fill="none" stroke="#ff0000" stroke-width="1"/>
<rect x="2" y="629" width="13" height="1" fill="#808080"/>
<rect x="0" y="641" width="17" height="17" fill="#f3f3f3"/>
<path d="M8.5 641.5H16.5V657.5H8.5" fill="none" stroke="#808080" stroke-width="1"/>
<path d="M8.5 641.5H0.5V657.5H8.5" fill="none" stroke="#ff0000" stroke-width="1"/>
<rect x="2" y="649" width="13" height="1" fill="#808080"/>
<rect x="0" y="661" width="17" height="17" fill="#f3f3f3"/>
<path d="M8.5 661.5H16.5V677.5H8.5" fill="none" stroke="#808080" stroke-width="1"/>
<path d="M8.5 661.5H0.5V677.5H8.5" fill="none" stroke="#ff0000" stroke-width="1"/>
<rect x="2" y="669" width="13" height="1" fill="#808080"/>
<rect x="9" y="790" width="8" height="1" fill="#808080"/>
<rect x="9" y="830" width="8" height="1" fill="#808080"/>
<rect x="9" y="850" width="8" height="1" fill="#808080"/>
<rect x="9" y="870" width="8" height="1" fill="#808080"/>
<rect x="0" y="881" width="17" height="17" fill="#f3f3f3"/>
<path d="M8.5 881.5H16.5V897.5H8.5" fill="none" stroke="#808080" stroke-width="1"/>
<path d="M8.5 881.5H0.5V897.5H8.5" fill="none" stroke="#ff0000" stroke-width="1"/>
<rect x="2" y="889" width="13" height="1" fill="#808080"/>
<rect x="0" y="901" width="17" height="17" fill="#f3f3f3"/>
<path d="M8.5 901.5H16.5V917.5H8.5" fill="none" stroke="#808080" stroke-width="1"/>
<path d="M8.5 901.5H0.5V917.5H8.5" fill="none" stroke="#ff0000" stroke-width="1"/>
<rect x="2" y="909" width="13" height="1" fill="#808080"/>
</svg>
<div class="ln" style="top:0px">3911</div>
<div class="ln" style="top:20px">3912</div>
<div class="ln" style="top:40px">3913</div>
<div class="ln" style="top:60px">3914</div>
<div class="ln" style="top:80px">3915</div>
<div class="ln" style="top:100px">3916</div>
<div class="ln" style="top:120px">3917</div>
<div class="ln" style="top:140px">3918</div>
<div class="ln" style="top:160px">3919</div>
<div class="ln" style="top:180px">3920</div>
<div class="ln" style="top:200px">3921</div>
<div class="ln" style="top:220px">3922</div>
<div class="ln" style="top:240px">3923</div>
<div class="ln" style="top:260px">3924</div>
<div class="ln" style="top:280px">3925</div>
<div class="ln" style="top:300px">3926</div>
<div class="ln" style="top:320px">3927</div>
<div class="ln" style="top:340px">3928</div>
<div class="ln" style="top:360px">3929</div>
<div class="ln" style="top:380px">3930</div>
<div class="ln" style="top:400px">3931</div>
<div class="ln" style="top:420px">3932</div>
<div class="ln" style="top:440px">3933</div>
<div class="ln" style="top:460px">3934</div>
<div class="ln" style="top:480px">3935</div>
<div class="ln" style="top:500px">3936</div>
<div class="ln" style="top:520px">3937</div>
<div class="ln" style="top:540px">3938</div>
<div class="ln" style="top:560px">3939</div>
<div class="ln" style="top:580px">3940</div>
<div class="ln" style="top:600px">3941</div>
<div class="ln" style="top:620px">3942</div>
<div class="ln" style="top:640px">3943</div>
<div class="ln" style="top:660px">3944</div>
<div class="ln" style="top:680px">3945</div>
<div class="ln" style="top:700px">3946</div>
<div class="ln" style="top:720px">3947</div>
<div class="ln" style="top:740px">3948</div>
<div class="ln" style="top:760px">3949</div>
<div class="ln" style="top:780px">3950</div>
<div class="ln" style="top:800px">3951</div>
<div class="ln" style="top:820px">3952</div>
<div class="ln" style="top:840px">3953</div>
<div class="ln" style="top:860px">3954</div>
<div class="ln" style="top:880px">3955</div>
<div class="ln" style="top:900px">3956</div>
<div class="g" style="left:138px;top:1px;height:20px"></div>
<div class="g" style="left:178px;top:1px;height:20px"></div>
<div class="cl" style="left:217px;top:0px"><span class="o">},</span></div>
<div class="g" style="left:138px;top:21px;height:20px"></div>
<div class="g" style="left:178px;top:21px;height:20px"></div>
<div class="cl" style="left:217px;top:20px"><span class="k">"contentcontainer"</span><span class="o">: </span><span class="o">{</span></div>
<div class="g" style="left:138px;top:41px;height:20px"></div>
<div class="g" style="left:178px;top:41px;height:20px"></div>
<div class="g" style="left:218px;top:41px;height:20px"></div>
<div class="cl" style="left:257px;top:40px"><span class="k">"generalcontainer"</span><span class="o">: </span><span class="o">{</span></div>
<div class="g" style="left:138px;top:61px;height:20px"></div>
<div class="g" style="left:178px;top:61px;height:20px"></div>
<div class="g" style="left:218px;top:61px;height:20px"></div>
<div class="g" style="left:258px;top:61px;height:20px"></div>
<div class="cl" style="left:297px;top:60px"><span class="k">"gamemodecontainer"</span><span class="o">: </span><span class="o">{</span></div>
<div class="g" style="left:138px;top:81px;height:20px"></div>
<div class="g" style="left:178px;top:81px;height:20px"></div>
<div class="g" style="left:218px;top:81px;height:20px"></div>
<div class="g" style="left:258px;top:81px;height:20px"></div>
<div class="g" style="left:298px;top:81px;height:20px"></div>
<div class="cl" style="left:337px;top:80px"><span class="k">"gamemodelabel"</span><span class="o">: </span><span class="s">"Tryb gry:"</span></div>
<div class="g" style="left:138px;top:101px;height:20px"></div>
<div class="g" style="left:178px;top:101px;height:20px"></div>
<div class="g" style="left:218px;top:101px;height:20px"></div>
<div class="g" style="left:258px;top:101px;height:20px"></div>
<div class="cl" style="left:297px;top:100px"><span class="o">},</span></div>
<div class="g" style="left:138px;top:121px;height:20px"></div>
<div class="g" style="left:178px;top:121px;height:20px"></div>
<div class="g" style="left:218px;top:121px;height:20px"></div>
<div class="g" style="left:258px;top:121px;height:20px"></div>
<div class="cl" style="left:297px;top:120px"><span class="k">"terraintypecontainer"</span><span class="o">: </span><span class="o">{</span></div>
<div class="g" style="left:138px;top:141px;height:20px"></div>
<div class="g" style="left:178px;top:141px;height:20px"></div>
<div class="g" style="left:218px;top:141px;height:20px"></div>
<div class="g" style="left:258px;top:141px;height:20px"></div>
<div class="g" style="left:298px;top:141px;height:20px"></div>
<div class="cl" style="left:337px;top:140px"><span class="k">"terraintypeflat"</span><span class="o">: </span><span class="s">"Płaski"</span><span class="o">,</span></div>
<div class="g" style="left:138px;top:161px;height:20px"></div>
<div class="g" style="left:178px;top:161px;height:20px"></div>
<div class="g" style="left:218px;top:161px;height:20px"></div>
<div class="g" style="left:258px;top:161px;height:20px"></div>
<div class="g" style="left:298px;top:161px;height:20px"></div>
<div class="cl" style="left:337px;top:160px"><span class="k">"terraintypelabel"</span><span class="o">: </span><span class="q">"</span><span class="b">Teren</span><span class="l">:</span><span class="q">"</span><span class="o">,</span></div>
<div class="g" style="left:138px;top:181px;height:20px"></div>
<div class="g" style="left:178px;top:181px;height:20px"></div>
<div class="g" style="left:218px;top:181px;height:20px"></div>
<div class="g" style="left:258px;top:181px;height:20px"></div>
<div class="g" style="left:298px;top:181px;height:20px"></div>
<div class="cl" style="left:337px;top:180px"><span class="k">"terraintypemountainous"</span><span class="o">: </span><span class="s">"Górzysty"</span></div>
<div class="g" style="left:138px;top:201px;height:20px"></div>
<div class="g" style="left:178px;top:201px;height:20px"></div>
<div class="g" style="left:218px;top:201px;height:20px"></div>
<div class="g" style="left:258px;top:201px;height:20px"></div>
<div class="cl" style="left:297px;top:200px"><span class="o">},</span></div>
<div class="g" style="left:138px;top:221px;height:20px"></div>
<div class="g" style="left:178px;top:221px;height:20px"></div>
<div class="g" style="left:218px;top:221px;height:20px"></div>
<div class="g" style="left:258px;top:221px;height:20px"></div>
<div class="cl" style="left:297px;top:220px"><span class="k">"worldnamecontainer"</span><span class="o">: </span><span class="o">{</span></div>
<div class="g" style="left:138px;top:241px;height:20px"></div>
<div class="g" style="left:178px;top:241px;height:20px"></div>
<div class="g" style="left:218px;top:241px;height:20px"></div>
<div class="g" style="left:258px;top:241px;height:20px"></div>
<div class="g" style="left:298px;top:241px;height:20px"></div>
<div class="cl" style="left:337px;top:240px"><span class="k">"worldnamelabel"</span><span class="o">: </span><span class="s">"Nazwa świata:"</span></div>
<div class="g" style="left:138px;top:261px;height:20px"></div>
<div class="g" style="left:178px;top:261px;height:20px"></div>
<div class="g" style="left:218px;top:261px;height:20px"></div>
<div class="g" style="left:258px;top:261px;height:20px"></div>
<div class="cl" style="left:297px;top:260px"><span class="o">},</span></div>
<div class="g" style="left:138px;top:281px;height:20px"></div>
<div class="g" style="left:178px;top:281px;height:20px"></div>
<div class="g" style="left:218px;top:281px;height:20px"></div>
<div class="g" style="left:258px;top:281px;height:20px"></div>
<div class="cl" style="left:297px;top:280px"><span class="k">"worldseedcontainer"</span><span class="o">: </span><span class="o">{</span></div>
<div class="g" style="left:138px;top:301px;height:20px"></div>
<div class="g" style="left:178px;top:301px;height:20px"></div>
<div class="g" style="left:218px;top:301px;height:20px"></div>
<div class="g" style="left:258px;top:301px;height:20px"></div>
<div class="g" style="left:298px;top:301px;height:20px"></div>
<div class="cl" style="left:337px;top:300px"><span class="k">"worldseedlabel"</span><span class="o">: </span><span class="q">"</span><span class="b">Nasionko</span><span class="l">:</span><span class="q">"</span></div>
<div class="g" style="left:138px;top:321px;height:20px"></div>
<div class="g" style="left:178px;top:321px;height:20px"></div>
<div class="g" style="left:218px;top:321px;height:20px"></div>
<div class="g" style="left:258px;top:321px;height:20px"></div>
<div class="cl" style="left:297px;top:320px"><span class="o">}</span></div>
<div class="g" style="left:138px;top:341px;height:20px"></div>
<div class="g" style="left:178px;top:341px;height:20px"></div>
<div class="g" style="left:218px;top:341px;height:20px"></div>
<div class="cl" style="left:257px;top:340px"><span class="o">}</span></div>
<div class="g" style="left:138px;top:361px;height:20px"></div>
<div class="g" style="left:178px;top:361px;height:20px"></div>
<div class="cl" style="left:217px;top:360px"><span class="o">},</span></div>
<div class="g" style="left:138px;top:381px;height:20px"></div>
<div class="g" style="left:178px;top:381px;height:20px"></div>
<div class="cl" style="left:217px;top:380px"><span class="k">"headercontainer"</span><span class="o">: </span><span class="o">{</span></div>
<div class="g" style="left:138px;top:401px;height:20px"></div>
<div class="g" style="left:178px;top:401px;height:20px"></div>
<div class="g" style="left:218px;top:401px;height:20px"></div>
<div class="cl" style="left:257px;top:400px"><span class="k">"headerlabel"</span><span class="o">: </span><span class="s">"Stworzyć nowy świat . . ."</span></div>
<div class="g" style="left:138px;top:421px;height:20px"></div>
<div class="g" style="left:178px;top:421px;height:20px"></div>
<div class="cl" style="left:217px;top:420px"><span class="o">},</span></div>
<div class="g" style="left:138px;top:441px;height:20px"></div>
<div class="g" style="left:178px;top:441px;height:20px"></div>
<div class="cl" style="left:217px;top:440px"><span class="k">"slots"</span><span class="o">: </span><span class="o">{</span></div>
<div class="g" style="left:138px;top:461px;height:20px"></div>
<div class="g" style="left:178px;top:461px;height:20px"></div>
<div class="g" style="left:218px;top:461px;height:20px"></div>
<div class="cl" style="left:257px;top:460px"><span class="k">"animals"</span><span class="o">: </span><span class="s">"Zwierząt"</span><span class="o">,</span></div>
<div class="g" style="left:138px;top:481px;height:20px"></div>
<div class="g" style="left:178px;top:481px;height:20px"></div>
<div class="g" style="left:218px;top:481px;height:20px"></div>
<div class="cl" style="left:257px;top:480px"><span class="k">"caves"</span><span class="o">: </span><span class="s">"Jaskinie"</span><span class="o">,</span></div>
<div class="g" style="left:138px;top:501px;height:20px"></div>
<div class="g" style="left:178px;top:501px;height:20px"></div>
<div class="g" style="left:218px;top:501px;height:20px"></div>
<div class="cl" style="left:257px;top:500px"><span class="k">"oreamount"</span><span class="o">: </span><span class="s">"Ilość rudy"</span><span class="o">,</span></div>
<div class="g" style="left:138px;top:521px;height:20px"></div>
<div class="g" style="left:178px;top:521px;height:20px"></div>
<div class="g" style="left:218px;top:521px;height:20px"></div>
<div class="cl" style="left:257px;top:520px"><span class="k">"vegetation"</span><span class="o">: </span><span class="s">"Wegetacja"</span><span class="o">,</span></div>
<div class="g" style="left:138px;top:541px;height:20px"></div>
<div class="g" style="left:178px;top:541px;height:20px"></div>
<div class="g" style="left:218px;top:541px;height:20px"></div>
<div class="cl" style="left:257px;top:540px"><span class="k">"worldtype"</span><span class="o">: </span><span class="s">"Typ świata"</span></div>
<div class="g" style="left:138px;top:561px;height:20px"></div>
<div class="g" style="left:178px;top:561px;height:20px"></div>
<div class="cl" style="left:217px;top:560px"><span class="o">}</span></div>
<div class="g" style="left:138px;top:581px;height:20px"></div>
<div class="cl" style="left:177px;top:580px"><span class="o">},</span></div>
<div class="g" style="left:138px;top:601px;height:20px"></div>
<div class="cl" style="left:177px;top:600px"><span class="k">"death"</span><span class="o">: </span><span class="o">{</span></div>
<div class="g" style="left:138px;top:621px;height:20px"></div>
<div class="g" style="left:178px;top:621px;height:20px"></div>
<div class="cl" style="left:217px;top:620px"><span class="k">"screen"</span><span class="o">: </span><span class="o">{</span></div>
<div class="g" style="left:138px;top:641px;height:20px"></div>
<div class="g" style="left:178px;top:641px;height:20px"></div>
<div class="g" style="left:218px;top:641px;height:20px"></div>
<div class="cl" style="left:257px;top:640px"><span class="k">"container"</span><span class="o">: </span><span class="o">{</span></div>
<div class="g" style="left:138px;top:661px;height:20px"></div>
<div class="g" style="left:178px;top:661px;height:20px"></div>
<div class="g" style="left:218px;top:661px;height:20px"></div>
<div class="g" style="left:258px;top:661px;height:20px"></div>
<div class="cl" style="left:297px;top:660px"><span class="k">"buttoncontainer"</span><span class="o">: </span><span class="o">{</span></div>
<div class="g" style="left:138px;top:681px;height:20px"></div>
<div class="g" style="left:178px;top:681px;height:20px"></div>
<div class="g" style="left:218px;top:681px;height:20px"></div>
<div class="g" style="left:258px;top:681px;height:20px"></div>
<div class="g" style="left:298px;top:681px;height:20px"></div>
<div class="cl" style="left:337px;top:680px"><span class="k">"defaultspawnbutton"</span><span class="o">: </span><span class="s">"Pustynia"</span><span class="o">,</span></div>
<div class="g" style="left:138px;top:701px;height:20px"></div>
<div class="g" style="left:178px;top:701px;height:20px"></div>
<div class="g" style="left:218px;top:701px;height:20px"></div>
<div class="g" style="left:258px;top:701px;height:20px"></div>
<div class="g" style="left:298px;top:701px;height:20px"></div>
<div class="cl" style="left:337px;top:700px"><span class="k">"primaryspawnbutton"</span><span class="o">: </span><span class="s">"Dom"</span><span class="o">,</span></div>
<div class="g" style="left:138px;top:721px;height:20px"></div>
<div class="g" style="left:178px;top:721px;height:20px"></div>
<div class="g" style="left:218px;top:721px;height:20px"></div>
<div class="g" style="left:258px;top:721px;height:20px"></div>
<div class="g" style="left:298px;top:721px;height:20px"></div>
<div class="cl" style="left:337px;top:720px"><span class="k">"quaternaryspawnbutton"</span><span class="o">: </span><span class="s">"Statek"</span><span class="o">,</span></div>
<div class="g" style="left:138px;top:741px;height:20px"></div>
<div class="g" style="left:178px;top:741px;height:20px"></div>
<div class="g" style="left:218px;top:741px;height:20px"></div>
<div class="g" style="left:258px;top:741px;height:20px"></div>
<div class="g" style="left:298px;top:741px;height:20px"></div>
<div class="cl" style="left:337px;top:740px"><span class="k">"secondaryspawnbutton"</span><span class="o">: </span><span class="s">"Namiot"</span><span class="o">,</span></div>
<div class="g" style="left:138px;top:761px;height:20px"></div>
<div class="g" style="left:178px;top:761px;height:20px"></div>
<div class="g" style="left:218px;top:761px;height:20px"></div>
<div class="g" style="left:258px;top:761px;height:20px"></div>
<div class="g" style="left:298px;top:761px;height:20px"></div>
<div class="cl" style="left:337px;top:760px"><span class="k">"tertiaryspawnbutton"</span><span class="o">: </span><span class="s">"Pojazd"</span></div>
<div class="g" style="left:138px;top:781px;height:20px"></div>
<div class="g" style="left:178px;top:781px;height:20px"></div>
<div class="g" style="left:218px;top:781px;height:20px"></div>
<div class="g" style="left:258px;top:781px;height:20px"></div>
<div class="cl" style="left:297px;top:780px"><span class="o">},</span></div>
<div class="g" style="left:138px;top:801px;height:20px"></div>
<div class="g" style="left:178px;top:801px;height:20px"></div>
<div class="g" style="left:218px;top:801px;height:20px"></div>
<div class="g" style="left:258px;top:801px;height:20px"></div>
<div class="cl" style="left:297px;top:800px"><span class="k">"respawnlabel"</span><span class="o">: </span><span class="s">"Wybierz punkt odrodzenia"</span></div>
<div class="g" style="left:138px;top:821px;height:20px"></div>
<div class="g" style="left:178px;top:821px;height:20px"></div>
<div class="g" style="left:218px;top:821px;height:20px"></div>
<div class="cl" style="left:257px;top:820px"><span class="o">}</span></div>
<div class="g" style="left:138px;top:841px;height:20px"></div>
<div class="g" style="left:178px;top:841px;height:20px"></div>
<div class="cl" style="left:217px;top:840px"><span class="o">}</span></div>
<div class="g" style="left:138px;top:861px;height:20px"></div>
<div class="cl" style="left:177px;top:860px"><span class="o">},</span></div>
<div class="g" style="left:138px;top:881px;height:20px"></div>
<div class="cl" style="left:177px;top:880px"><span class="k">"edit"</span><span class="o">: </span><span class="o">{</span></div>
<div class="g" style="left:138px;top:901px;height:20px"></div>
<div class="g" style="left:178px;top:901px;height:20px"></div>
<div class="cl" style="left:217px;top:900px"><span class="k">"color"</span><span class="o">: </span><span class="o">{</span></div>
</div>
<div id="vs" class="abs"><div class="abs" style="left:7px;top:655px;width:6px;height:21px;background:#858585"></div></div>
<div id="hs" class="abs"><div class="abs" style="left:21px;top:7px;width:585px;height:6px;background:#858585"></div></div>
<div id="status" class="abs">
<span id="s0" style="left:2px;margin-left:0.35px;transform:scaleX(0.9557)">JSON file</span>
<span id="s1" style="left:977px;margin-left:0.76px;transform:scaleX(0.9689)">length : 178,939</span>
<span id="s2" style="left:1097px;margin-left:0.86px;transform:scaleX(0.9487)">lines : 5,219</span>
<span id="s3" style="left:1252px;margin-left:0.22px;transform:scaleX(0.8879)">Ln : 1</span>
<span id="s4" style="left:1302px;margin-left:1.05px;transform:scaleX(0.9311)">Col : 1</span>
<span id="s5" style="left:1359px;margin-left:0.80px;transform:scaleX(0.8610)">Pos : 1</span>
<span id="s6" style="left:1577px;margin-left:1.50px;transform:scaleX(0.9359)">Windows (CR LF)</span>
<span id="s7" style="left:1715px;margin-left:0.45px;transform:scaleX(0.9260)">UTF-8</span>
<span id="s8" style="left:1865px;margin-left:-0.03px;transform:scaleX(0.9460)">INS</span>
<i style="left:973px"></i>
<i style="left:1247px"></i>
<i style="left:1573px"></i>
<i style="left:1711px"></i>
<i style="left:1861px"></i>
<i style="left:1899px"></i>
</div>
<div class="abs" style="left:1770px;top:986px;width:130px;height:45px;border-radius:9px;background:#fafafa;box-shadow:0 4px 24px rgba(0,0,0,.24),0 0 2px rgba(0,0,0,.22);overflow:hidden"><div class="abs" style="left:0;top:9px;width:114px;height:36px;background:#70ea68"></div><div class="abs" style="left:116px;top:10px;width:14px;height:16px;background:#70ea68"></div><div class="abs" style="left:116px;top:28px;width:14px;height:17px;background:#70ea68"></div><div class="abs" style="left:87px;top:9px;font-size:9px;line-height:11px;color:#a4d4bc;text-shadow:0 0 1px #e8fff0;white-space:nowrap">5 KB/s</div><svg class="abs" style="left:90px;top:20px" width="20" height="18" viewBox="0 0 20 18"><rect x="3" y="5" width="6" height="8" fill="#9fc6a0" stroke="#7fa890" stroke-width=".6"/><path d="M8 4q3-3 6-1l2 2v5q-3 2-8 1z" fill="#f1dfb0" stroke="#d8bf88" stroke-width=".6"/><path d="M7 13h9l-4.500 4z" fill="#5fd05a"/></svg><svg class="abs" style="left:116px;top:10px" width="14" height="35" viewBox="0 0 14 35"><path d="M5 2h4v5h3l-5 6-5-6h3z" fill="#5fcf58" stroke="#54b850" stroke-width=".7"/><path d="M2.500 24h9L7 30z" fill="#7b9bb0"/></svg><div class="abs" style="left:0;top:0;width:130px;height:45px;border-radius:9px;border:1px solid rgba(205,205,205,.85)"></div></div>
</body></html>
